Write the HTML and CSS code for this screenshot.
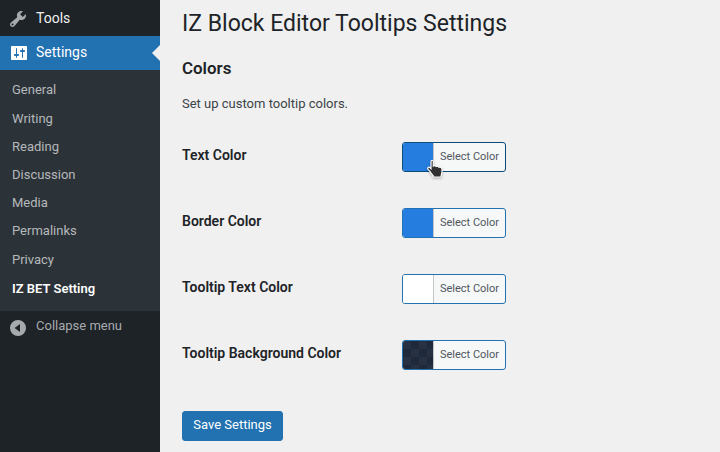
FILE: index.html
```html
<!DOCTYPE html>
<html lang="en">
<head>
<meta charset="utf-8">
<title>IZ Block Editor Tooltips Settings</title>
<link rel="stylesheet" href="styles.css">
</head>
<body>
<nav class="sidebar">
  <a class="menu-item"><svg class="icon" viewBox="0 0 20 20"><path d="M16.68 9.77c-1.34 1.34-3.3 1.67-4.95.99l-5.41 6.52c-.99.99-2.59.99-3.58 0s-.99-2.59 0-3.57l6.52-5.42c-.68-1.65-.35-3.61.99-4.95 1.28-1.28 3.12-1.62 4.72-1.06l-2.89 2.89 2.82 2.82 2.86-2.87c.53 1.58.18 3.39-1.08 4.65zM3.81 16.21c.4.39 1.04.39 1.43 0 .4-.4.4-1.04 0-1.43-.39-.4-1.03-.4-1.43 0-.39.39-.39 1.03 0 1.43z"/></svg><span>Tools</span></a>
  <a class="menu-item current"><svg class="icon" viewBox="0 0 20 20"><path d="M18 16V4c0-.55-.45-1-1-1H3c-.55 0-1 .45-1 1v12c0 .55.45 1 1 1h14c.55 0 1-.45 1-1zM8 11h1c.55 0 1 .45 1 1s-.45 1-1 1H8v1.5c0 .28-.22.5-.5.5s-.5-.22-.5-.5V13H6c-.55 0-1-.45-1-1s.45-1 1-1h1V5.5c0-.28.22-.5.5-.5s.5.22.5.5V11zm5-2h-1c-.55 0-1-.45-1-1s.45-1 1-1h1V5.5c0-.28.22-.5.5-.5s.5.22.5.5V7h1c.55 0 1 .45 1 1s-.45 1-1 1h-1v5.5c0 .28-.22.5-.5.5s-.5-.22-.5-.5V9z"/></svg><span>Settings</span></a>
  <ul class="submenu">
    <li>General</li>
    <li>Writing</li>
    <li>Reading</li>
    <li>Discussion</li>
    <li>Media</li>
    <li>Permalinks</li>
    <li>Privacy</li>
    <li class="active">IZ BET Setting</li>
  </ul>
  <div class="collapse"><svg class="collapse-icon" viewBox="0 0 16 16"><path fill-rule="evenodd" d="M8 0a8 8 0 1 1 0 16A8 8 0 0 1 8 0zM10 4L4.6 8l5.4 4z"/></svg><span>Collapse menu</span></div>
</nav>
<main class="content">
  <h1>IZ Block Editor Tooltips Settings</h1>
  <h2>Colors</h2>
  <p>Set up custom tooltip colors.</p>
  <div class="form">
    <div class="row"><span class="label">Text Color</span><button class="picker hovered"><span class="swatch blue"></span><span class="picker-text">Select Color</span>
      <svg class="cursor" viewBox="0 0 18 20"><path d="M4 2.600C4 .8 6.300.8 6.300 2.600V7c.9-.7 2.400-.4 2.800.4.9-.5 2.300-.1 2.700.8 1.500-.5 3.200.3 3.200 2V13c0 1.500-.8 2.300-.8 3.400V18H6.200v-1.400C4.700 15.300 3.700 13.800 2.700 12L1 10.400C-.1 9 1.500 7.600 2.800 8.600L4 9.600z"/></svg></button></div>
    <div class="row"><span class="label">Border Color</span><button class="picker"><span class="swatch blue"></span><span class="picker-text">Select Color</span></button></div>
    <div class="row"><span class="label">Tooltip Text Color</span><button class="picker"><span class="swatch white"></span><span class="picker-text">Select Color</span></button></div>
    <div class="row"><span class="label">Tooltip Background Color</span><button class="picker"><span class="swatch dark"></span><span class="picker-text">Select Color</span></button></div>
  </div>
  <button class="save">Save Settings</button>
</main>
</body>
</html>
```
FILE: styles.css
```css
* { box-sizing: border-box; }
body {
  margin: 0;
  height: 452px;
  display: flex;
  overflow: hidden;
  background: #f0f0f0;
  color: #3c434a;
  font: 13px/1.4 Roboto, "Liberation Sans", sans-serif;
}
.sidebar {
  width: 160px;
  flex: none;
  padding-top: 2px;
  background: #1d2327;
}
.menu-item {
  position: relative;
  display: flex;
  align-items: center;
  height: 34px;
  padding-left: 8px;
  gap: 8px;
  color: #f0f0f1;
  font-size: 14px;
  line-height: 18px;
}
.menu-item span { padding-bottom: 2px; }
.icon { width: 20px; height: 20px; fill: #a7aaad; }
.current { background: #2271b1; color: #fff; padding-left: 9px; gap: 7px; }
.current .icon { fill: #fff; }
.current::after {
  content: "";
  position: absolute;
  right: 0;
  top: 9px;
  border: 8px solid transparent;
  border-left: 0;
  border-right-color: #f0f0f0;
}
.submenu {
  display: grid;
  grid-template-rows: 29px repeat(4, 28px) 29px 29px 28px;
  margin: 0;
  height: 241px;
  padding: 6px 0 0;
  list-style: none;
  background: #2c3338;
  color: #b5b8bb;
}
.submenu li { padding: 5px 12px; }
.submenu .active { color: #fff; font-weight: 600; }
.collapse {
  display: flex;
  align-items: flex-start;
  gap: 10px;
  padding: 6px 10px;
  color: #a7aaad;
}
.collapse-icon { width: 16px; height: 16px; margin-top: 3px; fill: #a7aaad; }
.content { flex: 1; padding: 9px 22px 0; }
h1 {
  margin: 0;
  color: #1d2327;
  font-size: 23px;
  font-weight: 400;
  line-height: 30px;
}
h2 {
  margin: 18px 0 0;
  color: #1d2327;
  font-size: 16.9px;
  font-weight: 600;
  line-height: 22px;
}
p { margin: 15px 0 0; line-height: 20px; }
.form { margin-top: 9px; }
.row { display: flex; height: 66px; padding-top: 19px; }
.label {
  width: 220px;
  padding-top: 4px;
  color: #1d2327;
  font-size: 14px;
  font-weight: 600;
  line-height: 18px;
}
.picker {
  position: relative;
  display: flex;
  width: 104px;
  height: 30px;
  padding: 0;
  border: 1px solid #2271b1;
  border-radius: 3px;
  background: #f6f7f7;
  color: #50575e;
  font: 11px/28px Roboto, "Liberation Sans", sans-serif;
}
.hovered { border-color: #0a4b78; }
.swatch { width: 30px; height: 28px; border-radius: 2px 0 0 2px; }
.blue { background: #257de0; }
.white { background: #fff; }
.dark { background: repeating-conic-gradient(#1e293b 0 25%, #273142 0 50%) 0 0 / 16px 16px; }
.picker-text { flex: 1; height: 28px; border-left: 1px solid #c3c4c7; text-align: center; }
.cursor {
  position: absolute;
  left: 24px;
  top: 16px;
  width: 18px;
  height: 20px;
  fill: #303030;
  stroke: #fff;
  stroke-width: 1.2;
  overflow: visible;
  filter: drop-shadow(0 1px 1px rgb(0 0 0 / .3));
}
.save {
  display: block;
  width: 101px;
  height: 30px;
  margin-top: 24px;
  padding: 0 0 2px;
  border: 1px solid #2271b1;
  border-radius: 3px;
  background: #2271b1;
  color: #fff;
  font: 13px/26px Roboto, "Liberation Sans", sans-serif;
}
```
